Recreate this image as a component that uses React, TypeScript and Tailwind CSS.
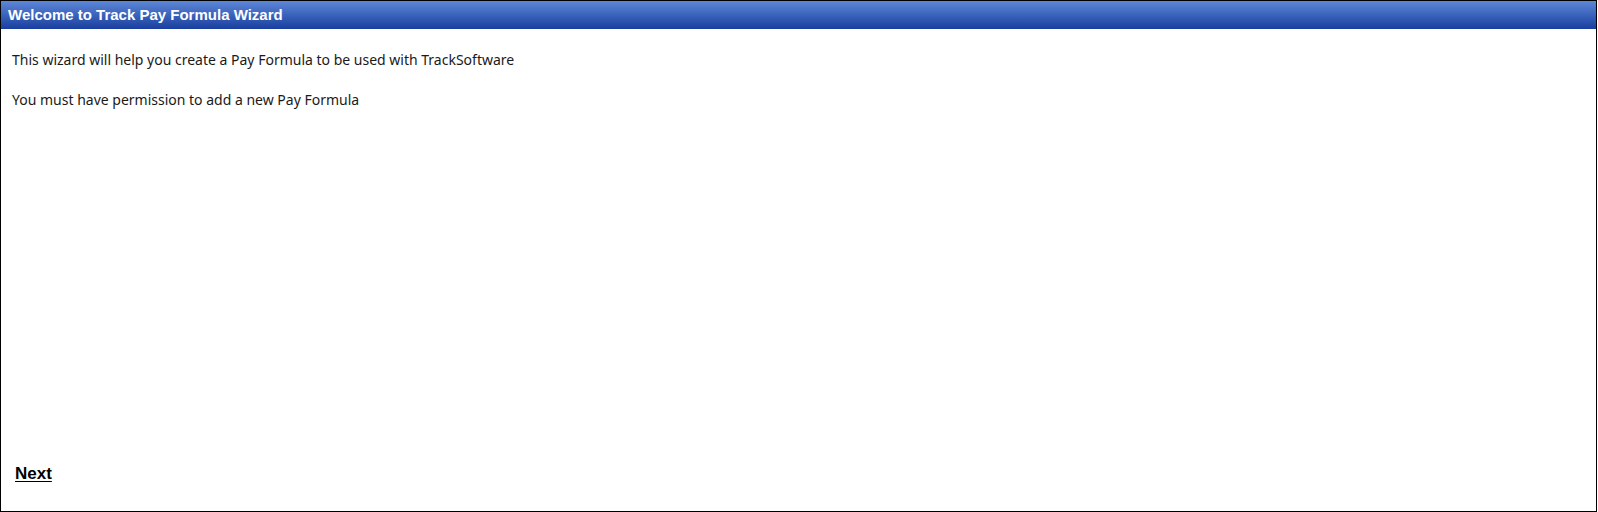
export default function App(): JSX.Element {
  return (
    <div className="flex h-[512px] w-[1598px] flex-col bg-white">
      <div className="flex h-full w-[1597px] flex-col border border-black">
        <div className="flex h-[28px] items-center bg-gradient-to-b from-[#5d87d8] to-[#1a3e9e] pl-[7px]">
          <span className="font-['Liberation_Sans',Arial,sans-serif] text-[15px] font-bold text-white">
            Welcome to Track Pay Formula Wizard
          </span>
        </div>

        <div className="flex flex-1 flex-col px-[11px] pt-[21px] font-['Noto_Sans',sans-serif] text-[14px] text-[#1a1a1a]">
          <p className="leading-[20px]">
            This wizard will help you create a Pay Formula to be used with TrackSoftware
          </p>
          <p className="mt-[20px] leading-[20px]">You must have permission to add a new Pay Formula</p>

          <div className="mt-auto pb-[25px] pl-[3px]">
            <button
              type="button"
              className="font-['Liberation_Sans',Arial,sans-serif] text-[17px] font-bold text-black underline underline-offset-2"
            >
              Next
            </button>
          </div>
        </div>
      </div>
    </div>
  );
}
